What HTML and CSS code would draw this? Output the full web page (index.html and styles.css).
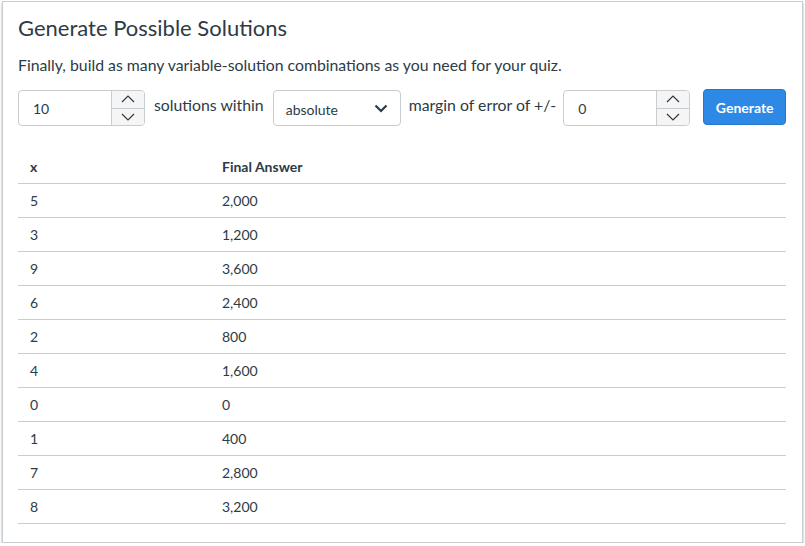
FILE: index.html
```html
<!DOCTYPE html>
<html>
<head>
<meta charset="utf-8">
<link rel="stylesheet" href="styles.css">
</head>
<body>
<div class="card">
  <h2 class="title">Generate Possible Solutions</h2>
  <p class="desc">Finally, build as many variable-solution combinations as you need for your quiz.</p>
  <div class="controls">
    <div class="num">
      <span class="num-val">10</span>
      <span class="spin">
        <span class="spin-btn"><svg width="14" height="8" viewBox="0 0 14 8"><path d="M1 7 L7 1 L13 7" fill="none" stroke="#2d3b45" stroke-width="1.2"/></svg></span>
        <span class="spin-btn"><svg width="14" height="8" viewBox="0 0 14 8"><path d="M1 1 L7 7 L13 1" fill="none" stroke="#2d3b45" stroke-width="1.2"/></svg></span>
      </span>
    </div>
    <span class="label">solutions within</span>
    <div class="select">
      <span class="sel-val">absolute</span>
      <svg width="14" height="9" viewBox="0 0 14 9"><path d="M1.5 1.5 L7 7 L12.5 1.5" fill="none" stroke="#2d3b45" stroke-width="2.2"/></svg>
    </div>
    <span class="label label-margin">margin of error of +/-</span>
    <div class="num">
      <span class="num-val">0</span>
      <span class="spin">
        <span class="spin-btn"><svg width="14" height="8" viewBox="0 0 14 8"><path d="M1 7 L7 1 L13 7" fill="none" stroke="#2d3b45" stroke-width="1.2"/></svg></span>
        <span class="spin-btn"><svg width="14" height="8" viewBox="0 0 14 8"><path d="M1 1 L7 7 L13 1" fill="none" stroke="#2d3b45" stroke-width="1.2"/></svg></span>
      </span>
    </div>
    <button class="btn">Generate</button>
  </div>
  <table class="tbl">
    <colgroup><col class="col1"><col></colgroup>
    <thead><tr><th>x</th><th>Final Answer</th></tr></thead>
    <tbody>
      <tr><td>5</td><td>2,000</td></tr>
      <tr><td>3</td><td>1,200</td></tr>
      <tr><td>9</td><td>3,600</td></tr>
      <tr><td>6</td><td>2,400</td></tr>
      <tr><td>2</td><td>800</td></tr>
      <tr><td>4</td><td>1,600</td></tr>
      <tr><td>0</td><td>0</td></tr>
      <tr><td>1</td><td>400</td></tr>
      <tr><td>7</td><td>2,800</td></tr>
      <tr><td>8</td><td>3,200</td></tr>
    </tbody>
  </table>
</div>
</body>
</html>
```
FILE: styles.css
```css
html, body { margin: 0; padding: 0; background: #fff; }
body { font-family: Lato, "Open Sans", sans-serif; color: #2d3b45; }
.card {
  margin: 1px 0 0 2px;
  width: 801px;
  height: 542px;
  box-sizing: border-box;
  border: 1px solid #c7cdd1;
  box-shadow: 0 2px 2px rgba(0,0,0,0.35);
  padding: 11px 15px 0 15px;
}
.title { font-size: 22px; font-weight: 400; margin: 0; line-height: 30px; }
.desc { font-size: 15.8px; margin: 10px 0 0 0; line-height: 24px; }
.controls { display: flex; align-items: center; margin-top: 12px; height: 38px; }
.num {
  flex-shrink: 0;
  display: flex; width: 127px; height: 36px; box-sizing: border-box;
  border: 1px solid #c7cdd1; border-radius: 4px; overflow: hidden;
}
.num-val { flex: 1; font-size: 14px; padding-left: 14px; display: flex; align-items: center; }
.spin { width: 32px; display: flex; flex-direction: column; border-left: 1px solid #c7cdd1; background: #f5f5f5; }
.spin-btn { flex: 1; display: flex; align-items: center; justify-content: center; }
.spin-btn + .spin-btn { border-top: 1px solid #c7cdd1; }
.label {
  flex-shrink: 0; white-space: nowrap;
  font-size: 15.8px; margin: 0 8px 0 9px; line-height: 20px; position: relative; top: -3px;
}
.label + .select { margin-left: 1px; }
.label-margin { margin: 0 7px 0 8px; }
.select {
  flex-shrink: 0;
  width: 128px; height: 36px; box-sizing: border-box; border: 1px solid #c7cdd1; border-radius: 4px;
  display: flex; align-items: center; justify-content: space-between; padding: 0 12px 0 12px;
}
.sel-val { font-size: 14px; position: relative; top: 1px; }
.btn {
  flex-shrink: 0;
  margin-left: 13px; width: 83px; height: 36px; background: #2d89e5; color: #fff; border: 1px solid #2677c9;
  border-radius: 4px; font-family: Lato, sans-serif; font-size: 14px; font-weight: 700; padding: 0;
  position: relative; top: -1px;
}
.tbl { width: 768px; table-layout: fixed; border-collapse: collapse; margin-top: 23px; font-size: 14px; }
.col1 { width: 192px; }
.tbl th, .tbl td { text-align: left; padding: 0 12px; height: 33px; border-bottom: 1px solid #c7cdd1; }
.tbl th { font-weight: 700; }
```
